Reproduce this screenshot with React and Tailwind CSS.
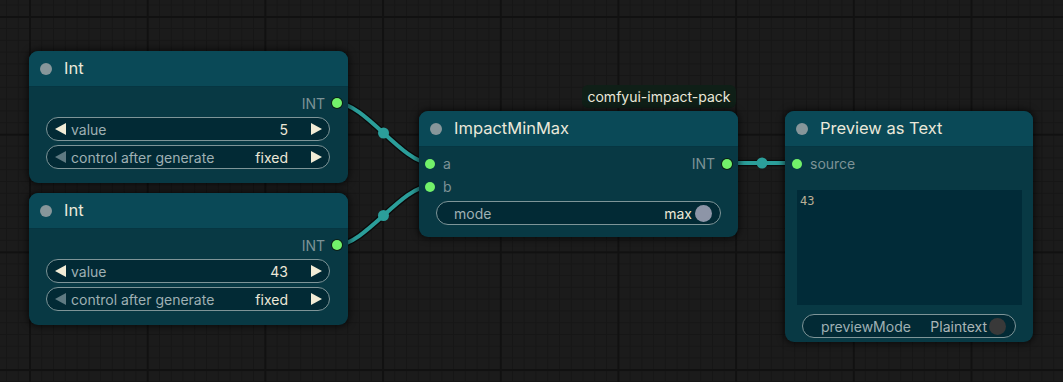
import React from "react";

const FONT = "font-['Inter','Noto_Sans',sans-serif]";

function Arrow({ dir = "left", dim = false }) {
  const fill = dim ? "#5f7a82" : "#f1ecd6";
  return (
    <svg width="11" height="12" viewBox="0 0 11 12" className="shrink-0">
      {dir === "left" ? (
        <polygon points="0,6 11,0 11,12" fill={fill} />
      ) : (
        <polygon points="11,6 0,0 0,12" fill={fill} />
      )}
    </svg>
  );
}

function Dot({ border = false }) {
  return (
    <span
      className={
        "block w-[10px] h-[10px] rounded-full bg-[#72f16a] shrink-0 " +
        (border ? "ring-1 ring-[#0b1f14]" : "")
      }
    />
  );
}

function NumberWidget({ label, value, dimLeft }) {
  return (
    <div className="h-6 rounded-full border border-[#7e9598] bg-[#022a35] flex items-center pl-[8px] pr-[7px]">
      <Arrow dir="left" dim={dimLeft} />
      <span className="ml-[5px] text-[14px] text-[#9fb0b3] flex-1">{label}</span>
      <span className="text-[14px] text-[#ece8d8] mr-[23px]">{value}</span>
      <Arrow dir="right" />
    </div>
  );
}

function Header({ title }) {
  return (
    <div className="h-[36px] bg-[#0a4957] border-b border-[#063642] flex items-center pl-[11px] rounded-t-[9px]">
      <span className="w-3 h-3 rounded-full bg-[#87969a]" />
      <span className="ml-3 text-[16.5px] text-[#ebe8da]">{title}</span>
    </div>
  );
}

function IntNode({ left, top, value }) {
  return (
    <div
      className="absolute w-[319px] h-[132px] rounded-[9px] bg-[#083944] shadow-[0_0_6px_2px_rgba(0,0,0,0.55)] flex flex-col"
      style={{ left, top }}
    >
      <Header title="Int" />
      <div className="flex flex-col pt-[6px] pl-[17px] pr-[18px]">
        <div className="h-5 flex items-center justify-end -mr-[12px]">
          <span className="text-[14px] text-[#7c9296] mr-[7px]">INT</span>
          <Dot border />
        </div>
        <div className="mt-[4px] flex flex-col gap-[4px]">
          <NumberWidget label="value" value={value} />
          <NumberWidget label="control after generate" value="fixed" dimLeft />
        </div>
      </div>
    </div>
  );
}

function Links() {
  const p = (x1, y1, x2, y2) => {
    const d = Math.hypot(x2 - x1, y2 - y1) * 0.25;
    return `M${x1},${y1} C${x1 + d},${y1} ${x2 - d},${y2} ${x2},${y2}`;
  };
  const links = [
    [337, 103, 430, 163],
    [337, 245, 430, 186],
    [727, 163, 797, 163],
  ];
  return (
    <svg className="absolute left-0 top-0" width="1063" height="382">
      {links.map(([a, b, c, d], i) => (
        <path key={"s" + i} d={p(a, b, c, d)} stroke="#0a0a0a" strokeWidth="6.5" fill="none" />
      ))}
      {links.map(([a, b, c, d], i) => (
        <path key={"l" + i} d={p(a, b, c, d)} stroke="#2b9e9a" strokeWidth="4" fill="none" />
      ))}
      {links.map(([a, b, c, d], i) => (
        <circle key={"c" + i} cx={(a + c) / 2} cy={(b + d) / 2} r="5.5" fill="#2b9e9a" />
      ))}
    </svg>
  );
}

export default function App() {
  return (
    <div
      className={
        "relative w-[1063px] h-[382px] overflow-hidden bg-[#1b1b1b] " +
        FONT +
        " [background-image:linear-gradient(to_right,#111111_2px,transparent_2px),linear-gradient(to_bottom,#111111_2px,transparent_2px),linear-gradient(to_right,#161616_1px,transparent_1px),linear-gradient(to_bottom,#161616_1px,transparent_1px)]" +
        " [background-size:117.7px_117.7px,117.7px_117.7px,11.77px_11.77px,11.77px_11.77px]" +
        " [background-position:29px_16px,29px_16px,6px_4.5px,6px_4.5px]"
      }
    >
      <Links />

      <IntNode left={29} top={51} value="5" />
      <IntNode left={29} top={193} value="43" />

      {/* badge */}
      <div className="absolute left-[582px] top-[85px] w-[154px] h-[23px] rounded-md bg-[#0f1f17] flex items-center justify-center text-[14px] text-[#ebe8da]">
        comfyui-impact-pack
      </div>

      {/* ImpactMinMax */}
      <div className="absolute left-[419px] top-[111px] w-[319px] h-[126px] rounded-[9px] bg-[#083944] shadow-[0_0_6px_2px_rgba(0,0,0,0.55)] flex flex-col">
        <Header title="ImpactMinMax" />
        <div className="flex flex-col pt-[5px]">
          <div className="h-[23px] flex items-center pl-[6px] pr-[6px]">
            <Dot />
            <span className="ml-[8px] text-[14px] text-[#7c9296] flex-1">a</span>
            <span className="text-[14px] text-[#7c9296] mr-[7px]">INT</span>
            <Dot border />
          </div>
          <div className="h-[23px] flex items-center pl-[6px]">
            <Dot />
            <span className="ml-[8px] text-[14px] text-[#7c9296]">b</span>
          </div>
          <div className="mt-[3px] mx-[17px] h-6 rounded-full border border-[#7e9598] bg-[#022a35] flex items-center pl-[17px] pr-[8px]">
            <span className="text-[14px] text-[#9fb0b3] flex-1">mode</span>
            <span className="text-[14px] text-[#ece8d8] mr-[3px]">max</span>
            <span className="w-[17px] h-[17px] rounded-full bg-[#8d95a7]" />
          </div>
        </div>
      </div>

      {/* Preview as Text */}
      <div className="absolute left-[785px] top-[111px] w-[248px] h-[231px] rounded-[9px] bg-[#083944] shadow-[0_0_6px_2px_rgba(0,0,0,0.55)] flex flex-col">
        <Header title="Preview as Text" />
        <div className="flex flex-col pt-[5px]">
          <div className="h-[23px] flex items-center pl-[7px]">
            <Dot />
            <span className="ml-[8px] text-[14px] text-[#7c9296]">source</span>
          </div>
          <div className="mt-[15px] ml-[12px] mr-[11px] h-[115px] bg-[#012b38] pl-[3px] pt-[3px]">
            <div className="font-['DejaVu_Sans_Mono',monospace] text-[12px] leading-[16px] text-[#b9ae96]">43</div>
          </div>
          <div className="mt-[9px] mx-[17px] h-6 rounded-full border border-[#7e9598] bg-[#022a35] flex items-center pl-[18px] pr-[9px]">
            <span className="text-[14px] text-[#9fb0b3] flex-1">previewMode</span>
            <span className="text-[14px] text-[#aab5b6] mr-[2px]">Plaintext</span>
            <span className="w-[17px] h-[17px] rounded-full bg-[#393939]" />
          </div>
        </div>
      </div>
    </div>
  );
}
